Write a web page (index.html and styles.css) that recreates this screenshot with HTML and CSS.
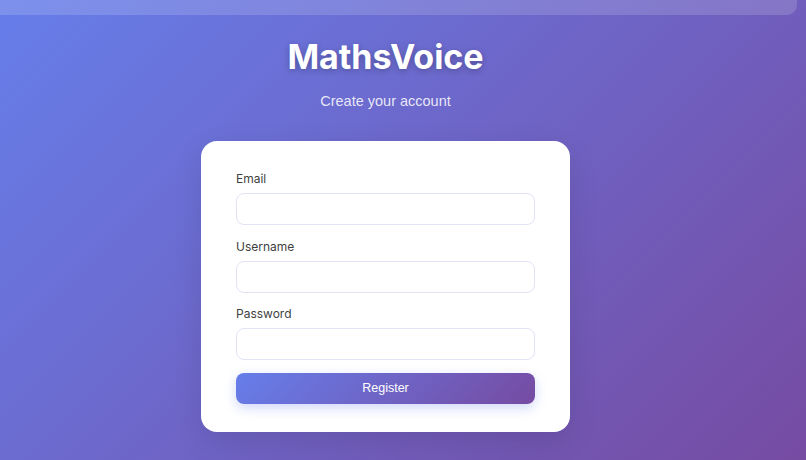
FILE: index.html
```html
<!DOCTYPE html>
<html lang="en">
<head>
<meta charset="utf-8">
<title>MathsVoice - Register</title>
<link rel="stylesheet" href="styles.css">
</head>
<body>
<div class="topbar"></div>
<main class="page">
  <h1 class="title">MathsVoice</h1>
  <p class="subtitle">Create your account</p>
  <form class="card">
    <div class="field">
      <label class="label" for="email">Email</label>
      <input class="input" id="email" type="email">
    </div>
    <div class="field">
      <label class="label" for="username">Username</label>
      <input class="input" id="username" type="text">
    </div>
    <div class="field">
      <label class="label" for="password">Password</label>
      <input class="input" id="password" type="password">
    </div>
    <button class="button" type="button">Register</button>
  </form>
</main>
</body>
</html>
```

FILE: styles.css
```css
html, body {
  margin: 0;
  height: 100%;
}
body {
  background: linear-gradient(135deg, #667eea 0%, #764ba2 100%);
  font-family: Inter, "Liberation Sans", sans-serif;
  overflow: hidden;
}
.topbar {
  width: 797px;
  height: 15px;
  background: rgba(255, 255, 255, 0.15);
  border-bottom-right-radius: 10px;
}
.page {
  width: 771px;
  display: flex;
  flex-direction: column;
  align-items: center;
}
.title {
  margin: 21px 0 0;
  font-size: 34px;
  line-height: 42px;
  font-weight: 700;
  color: #fff;
  text-shadow: 0 2px 6px rgba(0, 0, 0, 0.25);
}
.subtitle {
  margin: 13px 0 0;
  font-family: "Liberation Sans", Arial, sans-serif;
  font-size: 14.5px;
  line-height: 20px;
  color: rgba(255, 255, 255, 0.85);
}
.card {
  margin-top: 30px;
  width: 299px;
  padding: 29px 35px 28px;
  background: #fff;
  border-radius: 16px;
  box-shadow: 0 10px 30px rgba(0, 0, 0, 0.1);
}
.field {
  display: flex;
  flex-direction: column;
  margin-bottom: 12.5px;
}
.label {
  font-size: 12px;
  line-height: 18px;
  font-weight: 400;
  color: #3f3f3f;
  margin-bottom: 5px;
}
.input {
  box-sizing: border-box;
  height: 32px;
  width: 100%;
  margin: 0;
  border: 1.5px solid #e1e3f7;
  border-radius: 8px;
  background: #fff;
  outline: none;
}
.button {
  display: block;
  width: 100%;
  height: 31px;
  margin-top: 0;
  border: none;
  border-radius: 8px;
  background: linear-gradient(135deg, #667eea 0%, #764ba2 100%);
  color: #fff;
  font-family: "Liberation Sans", Arial, sans-serif;
  font-size: 12.5px;
  box-shadow: 0 4px 12px rgba(102, 126, 234, 0.3);
}
```
